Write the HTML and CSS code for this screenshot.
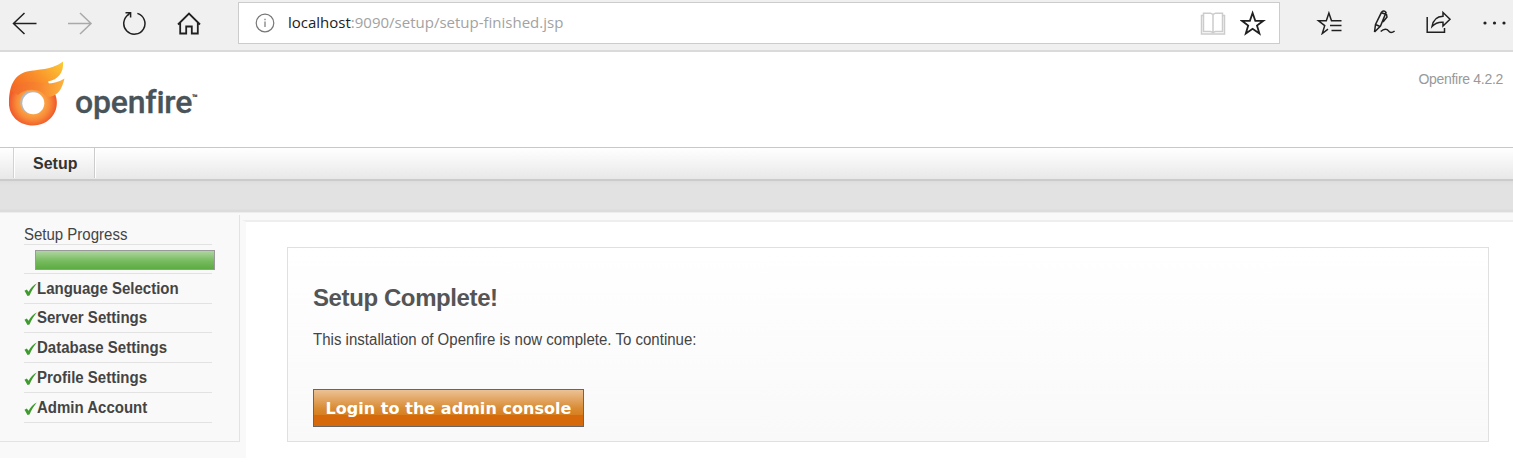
FILE: index.html
```html
<!DOCTYPE html>
<html lang="en">
<head>
<meta charset="utf-8">
<title>Openfire Setup</title>
<link rel="stylesheet" href="styles.css">
</head>
<body>
<header class="browser">
  <nav class="browser-nav">
    <svg class="icon" width="26" height="24" viewBox="12 11 26 24"><path d="M13.5 23.5H36.5M24.5 13L13.5 23.5L24.5 34"/></svg>
    <svg class="icon faded" width="26" height="24" viewBox="67 11 26 24"><path d="M68 23.5H91M80 13L91 23.5L80 34"/></svg>
    <svg class="icon" width="26" height="24" viewBox="122 11 26 24"><path d="M129 14.4A10.6 10.6 0 1 0 137.4 13.4M125.5 12.7H130.6V17.6M130.3 13L127 15.5"/></svg>
    <svg class="icon home" width="26" height="24" viewBox="177 11 26 24"><path d="M178 24.5L189 13.6L200 24.5M180.2 22.5V33.5H186.2V26.5H191.8V33.5H197.8V22.5"/></svg>
  </nav>
  <div class="address">
    <svg class="icon info" width="20" height="20" viewBox="0 0 20 20"><circle cx="10" cy="10" r="8.8"/><path d="M10 8.5V14M10 5.8V7.2"/></svg>
    <span class="url"><b>localhost</b>:9090/setup/setup-finished.jsp</span>
    <svg class="icon book" width="26" height="24" viewBox="1200 11 26 24"><path d="M1203.5 13.2H1210.5L1213 14.5L1215.5 13.2H1222.5V31.5H1215.5L1213 32.5L1210.5 31.5H1203.5ZM1213 14.5V32.5M1203 15.5H1201.5V34H1224.5V15.5H1223"/></svg>
    <svg class="icon star" width="26" height="26" viewBox="1240 10 26 26"><path d="M1252.6 13L1255.3 20.8H1263.3L1257 25.6L1259.4 33.6L1252.6 28.8L1245.8 33.6L1248.2 25.6L1241.9 20.8H1249.9Z"/></svg>
  </div>
  <div class="browser-tools">
    <svg class="icon" width="28" height="26" viewBox="1316 9 28 26"><path d="M1333 20.8H1331.5L1328.9 13L1326.3 20.8H1318.5L1324.7 25.6L1322.3 33.5L1328 29.2M1331.5 20.8H1341.5M1330 25.6H1341.5M1331.5 30.6H1341.5"/></svg>
    <svg class="icon" width="26" height="26" viewBox="1372 9 26 26"><path d="M1374.5 32L1375.5 24.500L1381.500 12.300Q1384 9.800 1386 12.500L1380.500 26L1374.500 32M1375.500 24.500L1380 26.500M1381.500 12.800L1386.500 14.500L1387 17L1383 22M1380.700 31.500C1384 28.500 1387 28.500 1388.300 30.700S1392 33 1394.600 31"/></svg>
    <svg class="icon" width="28" height="26" viewBox="1426 9 28 26"><path d="M1427.200 17V32.300H1444.500V28M1443 12.500L1450 19.300L1443 26V22.300C1438 21.800 1435 23.500 1432 26.500C1433 20.500 1436.500 16.500 1443 16.200Z"/></svg>
    <svg class="icon dots" width="26" height="26" viewBox="1481 9 26 26"><circle cx="1484" cy="23" r="1.600"/><circle cx="1493.500" cy="23" r="1.600"/><circle cx="1503" cy="23" r="1.600"/></svg>
  </div>
</header>

<section class="brand">
  <svg class="flame" width="58" height="68" viewBox="8 60 58 68">
    <defs>
      <linearGradient id="tail" x1="0" y1=".8" x2="1" y2="0"><stop offset="0" stop-color="#f15a22"/><stop offset=".5" stop-color="#f98b2a"/><stop offset="1" stop-color="#fdcb35"/></linearGradient>
      <linearGradient id="lick" x1="0" y1="0" x2="1" y2="0"><stop offset="0" stop-color="#f26a2a"/><stop offset=".5" stop-color="#f7842f"/><stop offset="1" stop-color="#fdb43c"/></linearGradient>
      <radialGradient id="ring" gradientUnits="userSpaceOnUse" cx="33" cy="103" r="24"><stop offset=".45" stop-color="#fba647"/><stop offset=".7" stop-color="#f88a38"/><stop offset="1" stop-color="#f0562a"/></radialGradient>
    </defs>
    <path fill="url(#tail)" d="M9 103C9 88 13 75 27 71.500C38 69 51 70.500 63 61.500C64 73 58 79.500 48 81.500L50 86L30 94L9 106Z"/>
    <path fill="url(#ring)" d="M9 103C9 92 18 82 33 82L55.500 95C61 111 49 125.500 33 125.500C19 125.500 9 116 9 103Z"/>
    <path fill="url(#lick)" d="M12 91C19 82 29 81 38 82.500C48 85 57 83 64.500 78.500C62 89 58 95 51 96.500C47 97.500 44 94 41 92C33 88 23 90 18 95Z"/>
    <circle cx="31.800" cy="102.300" r="11.500" fill="#b5babe"/>
    <circle cx="33.300" cy="103.300" r="11" fill="#fff"/>
  </svg>
  <div class="wordmark"><span>openfire</span><sup>™</sup></div>
  <span class="version">Openfire 4.2.2</span>
</section>

<nav class="tabs"><a class="tab">Setup</a></nav>
<div class="subbar"></div>

<div class="page">
  <aside class="sidebar">
    <div class="progress-title"><span class="narrow">Setup Progress</span></div>
    <div class="progress-row"><div class="progress"></div></div>
    <ul class="steps">
      <li><svg class="check" width="13" height="14" viewBox="0 0 13 14"><path d="M.5 7.800L2.800 6.500L4.600 8.800C6.500 5 9 2.500 12.800 .5C9.500 4.500 7.500 8 5.500 12.500L3.500 13Z"/></svg><span class="narrow">Language Selection</span></li>
      <li><svg class="check" width="13" height="14" viewBox="0 0 13 14"><path d="M.5 7.800L2.800 6.500L4.600 8.800C6.500 5 9 2.500 12.800 .5C9.500 4.500 7.500 8 5.500 12.500L3.500 13Z"/></svg><span class="narrow">Server Settings</span></li>
      <li><svg class="check" width="13" height="14" viewBox="0 0 13 14"><path d="M.5 7.800L2.800 6.500L4.600 8.800C6.500 5 9 2.500 12.800 .5C9.500 4.500 7.500 8 5.500 12.500L3.500 13Z"/></svg><span class="narrow">Database Settings</span></li>
      <li><svg class="check" width="13" height="14" viewBox="0 0 13 14"><path d="M.5 7.800L2.800 6.500L4.600 8.800C6.500 5 9 2.500 12.800 .5C9.500 4.500 7.500 8 5.500 12.500L3.500 13Z"/></svg><span class="narrow">Profile Settings</span></li>
      <li><svg class="check" width="13" height="14" viewBox="0 0 13 14"><path d="M.5 7.800L2.800 6.500L4.600 8.800C6.500 5 9 2.500 12.800 .5C9.500 4.500 7.500 8 5.500 12.500L3.500 13Z"/></svg><span class="narrow">Admin Account</span></li>
    </ul>
  </aside>
  <main class="main">
    <section class="panel">
      <h1>Setup Complete!</h1>
      <p><span class="narrow">This installation of Openfire is now complete. To continue:</span></p>
      <button class="login">Login to the admin console</button>
    </section>
  </main>
</div>
</body>
</html>
```

FILE: styles.css
```css
* { box-sizing: border-box; }
body { margin: 0; height: 465px; overflow: hidden; background: #fff; color: #444; font-family: "Liberation Sans", Arial, sans-serif; }
.browser { display: flex; height: 52px; background: #f0f0f0; border-bottom: 2px solid #dadada; }
.icon { display: block; flex: none; fill: none; stroke: #202020; stroke-width: 1.5; }
.browser-nav { display: flex; width: 238px; padding: 11px 0 0 12px; gap: 29px; }
.faded { stroke: #a9a9a9; }
.home { stroke-width: 1.8; }
.address { display: flex; width: 1042px; height: 42px; margin-top: 2px; padding-left: 16px; background: #fff; border: 1px solid #ccc; }
.info { margin-top: 10px; stroke: #777; stroke-width: 1.2; }
.url { flex: none; width: 925px; padding-left: 13px; line-height: 39px; font-family: "Open Sans", sans-serif; font-size: 15px; color: #a2a2a2; white-space: nowrap; }
.url b { font-weight: 400; color: #222; }
.book { margin-top: 8px; stroke: #ccc; }
.star { margin: 7px 0 0 14px; stroke-width: 1.8; }
.browser-tools { display: flex; padding: 9px 0 0 36px; gap: 28px; }
.dots { fill: #202020; stroke: none; }
.brand { display: flex; height: 95px; padding: 8px 10px 0 8px; }
.flame { flex: none; }
.wordmark { display: flex; width: 140px; margin-left: 9px; padding-top: 22px; font-family: Roboto, sans-serif; font-weight: 500; font-size: 32px; line-height: 40px; letter-spacing: -.2px; color: #485459; -webkit-text-stroke: .3px #485459; }
.wordmark sup { margin-top: 4px; font-size: 9px; line-height: 24px; }
.version { margin-left: auto; padding-top: 11px; font-size: 14px; line-height: 17px; letter-spacing: -.3px; color: #999; }
.tabs { display: flex; height: 34px; padding-left: 13px; background: linear-gradient(#fff, #e8e8e8); border-top: 1px solid #c8c8c8; border-bottom: 2px solid #cbcbcb; }
.tab { width: 82px; height: 30px; padding-left: 19px; border-left: 1px solid #d2d2d2; border-right: 1px solid #ccc; box-shadow: inset 1px 0 #fff, 1px 0 #fff; font-size: 16px; font-weight: 700; line-height: 31px; color: #333; }
.subbar { height: 32px; background: linear-gradient(#dcdcdc, #e2e2e2 4px, #e2e2e2 28px, #dcdcdc 29px, #dcdcdc 31px, #ededed 31px); }
.page { display: flex; height: 245px; background: #f9f9f9; }
.narrow { display: inline-block; transform: scaleX(.9375); transform-origin: left; font-size: 16px; }
.sidebar { flex: none; width: 240px; height: 227px; margin-top: 2px; padding: 11px 27px 0 24px; border-right: 1px solid #e3e3e3; border-bottom: 1px solid #e3e3e3; }
.progress-title { height: 19px; border-bottom: 1px solid #e2e2e2; line-height: 18px; }
.progress-row { height: 29px; padding: 5px 0 0 11px; border-bottom: 1px solid #e2e2e2; }
.progress { width: 180px; height: 20px; border: 1px solid #999; background: linear-gradient(#afd6a0, #77bb5f 55%, #5dab43); }
.steps { display: grid; grid-template-rows: 30px 29px 30px 30px 30px; margin: 0; padding: 0; list-style: none; }
.steps li { display: flex; align-items: center; border-bottom: 1px solid #e2e2e2; font-weight: 700; line-height: 20px; white-space: nowrap; }
.check { flex: none; fill: #3f9b2f; margin-top: 2px; }
.main { width: 1273px; height: 238px; margin-top: 7px; padding: 25px 24px 0 41px; background: #fff; border-top: 2px solid #eee; border-left: 6px solid #f9f9f9; border-top-left-radius: 5px; }
.panel { height: 195px; padding: 37px 25px 0; border: 1px solid #e0e0e0; background: linear-gradient(#fff, #f9f9f9); }
.panel h1 { margin: 0; font-size: 24px; line-height: 26px; letter-spacing: -.4px; color: #555; }
.panel p { height: 20px; margin: 19px 0 39px; line-height: 20px; letter-spacing: .02px; }
.login { display: block; width: 271px; height: 38px; padding: 1px 0 0; border: 1px solid #666; background: linear-gradient(#ecc295, #d98c35 50%, #d77f20 69%, #d6690b 70%, #d6690b); color: #fff; font: 700 16px/36px "DejaVu Sans", sans-serif; letter-spacing: .04px; white-space: nowrap; }
```
